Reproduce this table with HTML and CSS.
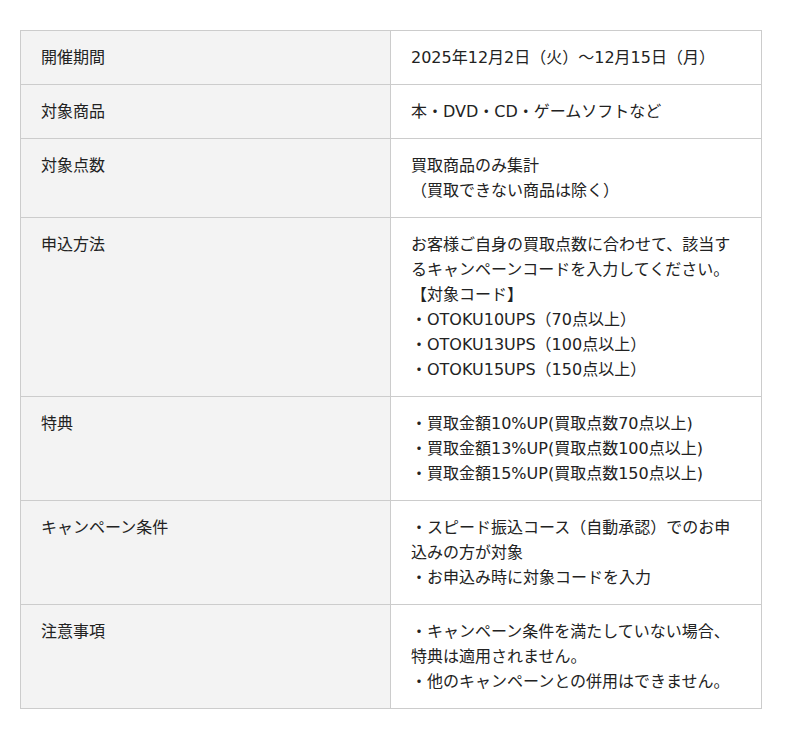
FILE: index.html
```html
<!DOCTYPE html>
<html lang="ja">
<head>
<meta charset="utf-8">
<link rel="stylesheet" href="styles.css">
</head>
<body>
<table class="info">
  <tr><th>開催期間</th><td>2025年12月2日（火）～12月15日（月）</td></tr>
  <tr><th>対象商品</th><td>本・DVD・CD・ゲームソフトなど</td></tr>
  <tr><th>対象点数</th><td>買取商品のみ集計<br>（買取できない商品は除く）</td></tr>
  <tr><th>申込方法</th><td>お客様ご自身の買取点数に合わせて、該当するキャンペーンコードを入力してください。<br>【対象コード】<br>・OTOKU10UPS（70点以上）<br>・OTOKU13UPS（100点以上）<br>・OTOKU15UPS（150点以上）</td></tr>
  <tr><th>特典</th><td>・買取金額10%UP(買取点数70点以上)<br>・買取金額13%UP(買取点数100点以上)<br>・買取金額15%UP(買取点数150点以上)</td></tr>
  <tr><th>キャンペーン条件</th><td>・スピード振込コース（自動承認）でのお申込みの方が対象<br>・お申込み時に対象コードを入力</td></tr>
  <tr><th>注意事項</th><td>・キャンペーン条件を満たしていない場合、特典は適用されません。<br>・他のキャンペーンとの併用はできません。</td></tr>
</table>
</body>
</html>
```

FILE: styles.css
```css
html, body {
  margin: 0;
  padding: 0;
  background: #fff;
}
body {
  padding: 30px 20px;
  font-family: "DejaVu Sans", "Noto Sans CJK JP", sans-serif;
  font-size: 16px;
  line-height: 25px;
  color: #222;
}
.info {
  width: 742px;
  border-collapse: collapse;
  table-layout: fixed;
}
.info th, .info td {
  border: 1px solid #ccc;
  padding: 14px 20px;
  vertical-align: top;
  text-align: left;
  font-weight: normal;
}
.info th {
  width: 329px;
  background: #f3f3f3;
}
.info td {
  background: #fff;
}
```
